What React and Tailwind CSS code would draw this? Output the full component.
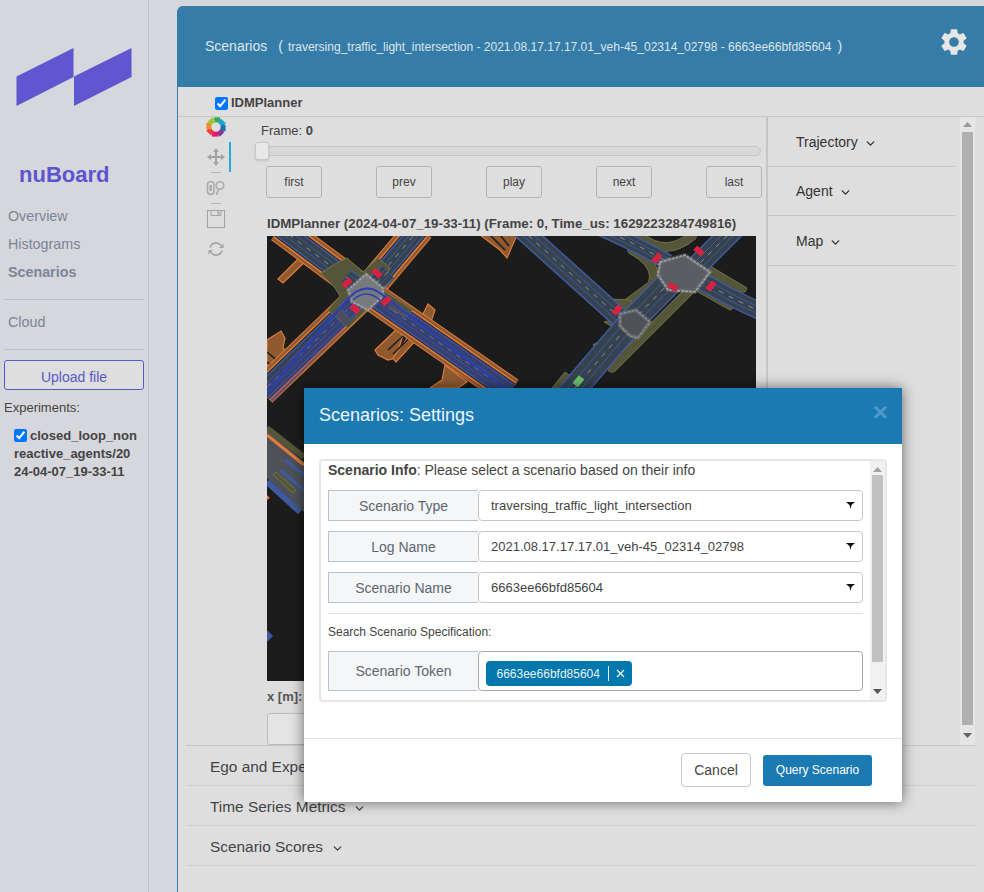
import React from 'react'
import { MdSettings } from 'react-icons/md'
import { FiChevronDown } from 'react-icons/fi'

const font = { fontFamily: '"Liberation Sans", Arial, sans-serif' }

// one road: kerb, tarmac, lane edges and dashes stacked as strokes
const Road = ({ d, w = 22, edge = '#3f5a9c', walk = false }) => (
    <g fill="none" strokeLinejoin="round">
        {walk && <path d={d} stroke="#e07b39" strokeWidth={w + 12} />}
        {walk && <path d={d} stroke="#8f5a30" strokeWidth={w + 10} />}
        {walk && <path d={d} stroke="#e07b39" strokeWidth={w + 5} />}
        {walk && <path d={d} stroke="#242424" strokeWidth={w + 2} />}
        <path d={d} stroke={edge} strokeWidth={w} />
        <path d={d} stroke="#36424e" strokeWidth={w - 3} />
        <path d={d} stroke="#3f5a9c" strokeWidth={w * 0.42} />
        <path d={d} stroke="#36424e" strokeWidth={w * 0.42 - 1.5} />
        <path d={d} stroke="#8b9096" strokeWidth="1" strokeDasharray="5 6" />
    </g>
)

const Kerb = ({ d, w = 8 }) => (
    <g fill="none" strokeLinejoin="round" strokeLinecap="round">
        <path d={d} stroke="#73734a" strokeWidth={w + 1.5} />
        <path d={d} stroke="#55553a" strokeWidth={w} />
    </g>
)

const Crossing = ({ points, fill = '#5a5e63', lines = '#b5b5b5' }) => (
    <g>
        <polygon points={points} fill={fill} stroke={lines} strokeWidth="1.5" strokeDasharray="3 1" />
        <polygon points={points} fill="none" stroke="#8a8a8a" strokeWidth="4" strokeOpacity="0.35" />
    </g>
)

const Light = ({ x, y, r = 45 }) => (
    <rect x={x - 5} y={y - 3} width="10" height="6" fill="#d6223f" transform={`rotate(${r} ${x} ${y})`} />
)

const MapPlot = () => (
    <svg viewBox="267 236 489 445" className="block w-[489px] h-[445px] bg-[#1c1c1c]">
        {/* orange parking areas */}
        <g fill="#8f5a30" stroke="#e07b39" strokeWidth="1.2">
            <polygon points="304,253 309,258 283,283 278,279" />
            <polygon points="267,340 281,331 285,338 283,348 293,358 267,378" />
            <polygon points="375,350 398,328 403,335 396,358 388,360 378,355" />
            <polygon points="420,320 428,304 435,310 430,325 396,362 393,358" />
            <polygon points="430,388 442,380 445,365 467,382 458,388" />
            <polygon points="480,235 517,235 507,258 500,250" />
        </g>
        <g fill="none" stroke="#1c1c1c" strokeWidth="1.5">
            <path d="M267,352 L286,368 M267,362 L282,374" />
            <path d="M388,350 L420,320 M393,354 L426,322" />
            <path d="M490,235 L505,250 M500,235 L509,246" />
        </g>
        {/* walkways first, the kerb shapes sit on top near the junction */}
        <Road d="M280,228 L366,292" w={18} walk />
        <Road d="M420,228 L366,292" w={18} walk />
        <Road d="M366,292 L262,392" w={18} walk />
        <Road d="M366,292 L510,392" w={18} walk />
        <polygon points="347,258 363,272 378,258 390,268 380,288 413,310 406,317 370,298 366,310 348,328 328,310 340,296 335,288 321,273 335,264" fill="#55553a" stroke="#73734a" strokeWidth="1" />
        <Road d="M346,277 L388,307" w={18} />
        <Road d="M388,272 L345,312" w={18} />
        <path d="M267,396 L366,292 L510,392" fill="none" stroke="#3a3fb0" strokeOpacity="0.35" strokeWidth="18" />
        <Crossing points="366,274 383,288 383,296 368,310 352,302 348,290" fill="#77797d" />
        <path d="M347,300 Q366,278 386,298" fill="none" stroke="#2b3fb0" strokeWidth="2" />
        <path d="M353,300 Q366,288 380,300" fill="none" stroke="#2b3fb0" strokeWidth="1.5" />
        <path d="M267,392 L347,300" fill="none" stroke="#2b3fb0" strokeWidth="2" />
        <path d="M386,298 L510,392" fill="none" stroke="#2b3fb0" strokeWidth="2" />
        <Light x={347} y={283} r={-40} />
        <Light x={377} y={273} r={40} />
        <Light x={355} y={309} r={40} />
        <Light x={386} y={301} r={-40} />

        {/* right side network */}
        <Kerb d="M632,250 Q660,265 652,285 L625,305" />
        <Kerb d="M640,236 Q665,258 692,236" />
        <Kerb d="M700,290 L730,307" w={5} />
        <Kerb d="M690,290 L655,325 L612,368" />
        <polygon points="705,263 747,288 745,292 712,290" fill="#55553a" stroke="#73734a" strokeWidth="1" />
        <polygon points="590,298 620,318 604,322 618,330 593,345 600,348 640,320 630,300" fill="#55553a" stroke="#73734a" strokeWidth="1" />
        <polygon points="552,388 565,372 572,377 560,388" fill="#55553a" stroke="#73734a" strokeWidth="1" />
        <Road d="M520,228 L620,318" w={20} />
        <Road d="M600,228 Q640,246 668,262" w={16} />
        <Road d="M735,228 L695,268" w={22} />
        <Road d="M700,280 Q730,298 762,312" w={18} />
        <Road d="M672,280 L633,320 L575,388 L565,400" w={26} />
        <Crossing points="620,314 636,310 650,322 638,338 630,336 620,326" fill="#4e5258" lines="#8a8a8a" />
        <Crossing points="660,262 685,255 710,272 695,292 668,290 658,275" />
        <rect x="575" y="376" width="7" height="10" rx="1" fill="#6fc36f" transform="rotate(40 578 381)" />
        <Light x={617} y={310} r={-50} />
        <Light x={657} y={258} r={-50} />
        <Light x={699} y={251} r={40} />
        <Light x={673} y={287} r={30} />
        <Light x={711} y={286} r={-50} />

        {/* strip left of the dialog */}
        <polygon points="267,430 304,462 304,512 267,478" fill="#4e5258" />
        <path d="M267,428 L304,457" fill="none" stroke="#55553a" strokeWidth="6" />
        <path d="M267,435 L304,465" fill="none" stroke="#e07b39" strokeWidth="3" />
        <path d="M267,482 L300,512" fill="none" stroke="#3f5a9c" strokeWidth="6" />
        <path d="M285,460 L304,475 M280,470 L304,490" fill="none" stroke="#3f5a9c" strokeWidth="3" />
        <polygon points="273,475 276,472 296,490 293,493" fill="#55553a" stroke="#73734a" strokeWidth="1" />
        <polygon points="267,495 270,498 267,500" fill="#e07b39" />
        <polygon points="267,630 273,636 267,642" fill="#3f5a9c" />
    </svg>
)

const ToolLogo = () => {
    const colors = ['#3aa655', '#1ca6c9', '#1f6fb5', '#7b3f98', '#e6147a', '#e9403a', '#f28c28', '#9fc43a']
    return (
        <svg width="20" height="20" viewBox="-10 -10 20 20">
            {colors.map((c, i) => (
                <rect key={c} x="-2.2" y="-9.6" width="6.4" height="5" fill={c} transform={`rotate(${i * 45})`} />
            ))}
        </svg>
    )
}

const MoveIcon = () => (
    <svg width="18" height="18" viewBox="0 0 18 18" fill="#a3a3a3">
        <path d="M9 0 L12 4 H10 V8 H14 V6 L18 9 L14 12 V10 H10 V14 H12 L9 18 L6 14 H8 V10 H4 V12 L0 9 L4 6 V8 H8 V4 H6 Z" />
    </svg>
)

const ZoomIcon = () => (
    <svg width="20" height="16" viewBox="0 0 20 16" fill="none" stroke="#aaa" strokeWidth="1.6">
        <rect x="1.5" y="1.5" width="6.5" height="13" rx="3.2" />
        <path d="M4.7 5 V11" strokeWidth="2.4" />
        <circle cx="14" cy="5.5" r="3.8" />
        <path d="M12.6 9.2 L10.5 15" />
    </svg>
)

const SaveIcon = () => (
    <svg width="18" height="18" viewBox="0 0 18 18" fill="none" stroke="#a3a3a3" strokeWidth="1">
        <rect x="0.5" y="0.5" width="17" height="17" />
        <path d="M4 0.5 V5.5 H14 V0.5" />
        <rect x="10.5" y="1.5" width="2" height="3" fill="#a3a3a3" stroke="none" />
    </svg>
)

const ResetIcon = () => (
    <svg width="16" height="16" viewBox="0 0 16 16" fill="none" stroke="#a3a3a3" strokeWidth="1.7">
        <path d="M2 6.5 A6.2 6.2 0 0 1 13 4.5" />
        <path d="M14 9.5 A6.2 6.2 0 0 1 3 11.5" />
        <path d="M15.5 2.5 L15.5 7 L11 7 Z" fill="#a3a3a3" stroke="none" />
        <path d="M0.5 13.5 L0.5 9 L5 9 Z" fill="#a3a3a3" stroke="none" />
    </svg>
)

const Sidebar = () => (
    <div className="w-[149px] shrink-0 border-r border-[#c3c4c8] h-full pl-1 pr-1">
        <svg width="116" height="60" viewBox="0 0 116 60" className="ml-3 mt-12 block" fill="#5f57cf">
            <polygon points="0.5,28.5 57.5,0 57.5,29 0.5,58" />
            <polygon points="58,28.5 115.5,0 115.5,29 58,58" />
        </svg>
        <div className="ml-[15px] mt-[53px] text-[22px] leading-[28px] font-bold text-[#5c55d0]">nuBoard</div>
        <div className="ml-1 mt-[13px] text-[14.3px] text-[#7b8597]">
            <div className="h-7 leading-7">Overview</div>
            <div className="h-7 leading-7">Histograms</div>
            <div className="h-7 leading-7 font-bold">Scenarios</div>
        </div>
        <div className="mt-[13px] w-[140px] border-t border-[#bfc0c4]"></div>
        <div className="ml-1 mt-[8px] h-7 leading-7 text-[14.3px] text-[#7b8597]">Cloud</div>
        <div className="mt-[13px] w-[140px] border-t border-[#bfc0c4]"></div>
        <div className="mt-[10px] w-[140px] h-[30px] leading-[32px] text-center border border-[#5a59c6] rounded-[3px] bg-[#dedede] text-[14px] text-[#5a59c6]">Upload file</div>
        <div className="mt-[10px] text-[13px] leading-4 text-[#444]">Experiments:</div>
        <div className="mt-[11px] ml-[10px] text-[13px] leading-[18px] font-bold text-[#444] whitespace-nowrap">
            <input type="checkbox" defaultChecked className="w-[13px] h-[13px] mr-[3px] align-[-2px]" />
            closed_loop_non<br />reactive_agents/20<br />24-04-07_19-33-11
        </div>
    </div>
)

const Toolbar = () => (
    <div className="w-[54px] shrink-0 relative flex flex-col items-center pl-[22px]">
        <div className="h-[20px] flex items-center"><ToolLogo /></div>
        <div className="absolute right-0 top-[25px] w-[2px] h-[30px] bg-[#26aae1] mr-[1px]"></div>
        <div className="h-[18px] mt-[11px]"><MoveIcon /></div>
        <div className="w-[10px] mt-[6px] border-t border-[#b9b9b9]"></div>
        <div className="h-[16px] mt-[7px]"><ZoomIcon /></div>
        <div className="w-[10px] mt-[7px] border-t border-[#b9b9b9]"></div>
        <div className="h-[18px] mt-[6px]"><SaveIcon /></div>
        <div className="h-[16px] mt-[13px]"><ResetIcon /></div>
    </div>
)

const PlayerButton = ({ children }) => (
    <div className="w-[56px] h-[32px] leading-[31px] text-center border border-[#b4b4b4] rounded-[3px] text-[12px] text-[#444]">{children}</div>
)

const Player = () => (
    <div className="w-[534px] shrink-0 pl-[24px]">
        <div className="ml-[5px] mt-[6px] text-[13px] leading-4 text-[#444]">Frame: <b>0</b></div>
        <div className="relative mt-[3px] h-[18px] w-[505px] flex items-center">
            <div className="w-full h-[10px] rounded-full border border-[#c4c4c4] bg-[#d8d8d8]"></div>
            <div className="absolute left-[-1px] top-0 w-[14px] h-[18px] rounded-[3px] border border-[#c8c8c8] bg-[#e8e8e8] shadow-sm"></div>
        </div>
        <div className="mt-[6px] ml-[10px] w-[496px] flex justify-between">
            <PlayerButton>first</PlayerButton>
            <PlayerButton>prev</PlayerButton>
            <PlayerButton>play</PlayerButton>
            <PlayerButton>next</PlayerButton>
            <PlayerButton>last</PlayerButton>
        </div>
        <div className="ml-[11px] mt-[18px] h-4 leading-4 whitespace-nowrap text-[13.3px] font-bold text-[#444]">IDMPlanner (2024-04-07_19-33-11) (Frame: 0, Time_us: 1629223284749816)</div>
        <div className="ml-[11px] mt-[4px]"><MapPlot /></div>
        <div className="ml-[11px] mt-[8px] text-[13px] leading-4 font-bold text-[#555]">x [m]:</div>
        <div className="ml-[11px] mt-[8px] w-[200px] h-[32px] border border-[#bcbcbc] rounded-[3px] bg-[#e4e4e4]"></div>
    </div>
)

const SideSection = ({ title }) => (
    <div className="h-[49.5px] pt-[2px] border-b border-[#c6c6c6] pl-[28px] flex items-center gap-[6px] text-[14px] text-[#333]">
        {title}
        <FiChevronDown size={13} strokeWidth={2.5} className="mt-[2px]" />
    </div>
)

const Accordion = ({ title }) => (
    <div className="h-[40px] pt-[3px] border-b border-[#cfcfcf] pl-[24px] flex items-center gap-[8px] text-[15.4px] text-[#444]">
        {title}
        <FiChevronDown size={13} strokeWidth={2.5} className="mt-[2px]" />
    </div>
)

const Arrow = ({ up, color = '#777' }) => (
    <svg width="9" height="5" viewBox="0 0 9 5" fill={color} className="block">
        <polygon points={up ? '4.5,0 9,5 0,5' : '0,0 9,0 4.5,5'} />
    </svg>
)

const Panel = () => (
    <div className="ml-[28px] flex-1 h-[886px] mt-[6px] rounded-tl-[6px] border-l border-[#367ca8] bg-[#dedede] flex flex-col">
        <div className="h-[81px] shrink-0 bg-[#367ca8] rounded-tl-[5px] flex items-center pl-[27px] pr-[16px] text-[#dce6ee]">
            <span className="text-[14px]">Scenarios</span>
            <span className="ml-[11px] text-[14px]">(</span>
            <span className="ml-[5px] text-[12px] whitespace-nowrap">traversing_traffic_light_intersection - 2021.08.17.17.17.01_veh-45_02314_02798 - 6663ee66bfd85604</span>
            <span className="ml-[6px] text-[14px]">)</span>
            <MdSettings size={32} className="ml-auto mb-[10px] mr-[-2px] text-[#e6e6e6]" />
        </div>
        <div className="h-[30px] shrink-0 pt-[3px] border-b border-[#c8c8c8] pl-[37px] flex items-center gap-[3px] text-[13px] font-bold text-[#444]">
            <input type="checkbox" defaultChecked className="w-[13px] h-[13px]" />
            IDMPlanner
        </div>
        <div className="h-[628px] shrink-0 flex overflow-hidden">
            <Toolbar />
            <Player />
            <div className="w-[189px] shrink-0 border-l-2 border-[#c6c6c6]">
                <SideSection title="Trajectory" />
                <SideSection title="Agent" />
                <SideSection title="Map" />
            </div>
            <div className="w-[15px] ml-[5px] shrink-0 bg-[#e6e6e6] flex flex-col items-center pt-[5px]">
                <Arrow up color="#999" />
                <div className="mt-[5px] w-[11px] h-[593px] bg-[#b0b0b0]"></div>
                <div className="mt-[8px]"><Arrow color="#666" /></div>
            </div>
        </div>
        <div className="mx-[8px] w-[789px] border-t border-[#c6c6c6]">
            <Accordion title="Ego and Expert Stats" />
            <Accordion title="Time Series Metrics" />
            <Accordion title="Scenario Scores" />
        </div>
    </div>
)

const FieldRow = ({ label, value }) => (
    <div className="flex h-[31px] mt-[10px]">
        <div className="w-[150px] text-center leading-[31px] text-[14px] text-[#5d6670] bg-[#f5f6f8] border border-r-0 border-[#b8c2cc]">{label}</div>
        <div className="w-[385px] h-[31px] pl-3 pr-[7px] flex items-center justify-between text-[13px] text-[#444] bg-white border border-[#c8c8c8] rounded-[4px]">
            {value}
            <svg width="9" height="7" viewBox="0 0 9 7" fill="#111"><polygon points="0,0 9,0 5.5,3 4.5,7 3.5,3" /></svg>
        </div>
    </div>
)

const SettingsModal = () => (
    <div className="absolute left-[304px] top-[388px] w-[598px] h-[414px] bg-white rounded-[2px] shadow-[0_0_14px_rgba(0,0,0,0.55)] flex flex-col">
        <div className="h-[56px] shrink-0 bg-[#1c7ab3] flex items-center justify-between pl-[15px] pr-[14px]">
            <span className="text-[18px] text-[#eef5fa] mt-[-2px]">Scenarios: Settings</span>
            <span className="text-[26px] font-bold text-[#4f9acb] mt-[-8px]">×</span>
        </div>
        <div className="h-[294px] shrink-0 pt-[16px] pl-[15px]">
            <div className="w-[568px] h-[243px] border-2 border-[#e6e6e6] rounded-[4px] flex overflow-hidden -mt-px">
                <div className="flex-1 pl-[7px] pt-px">
                    <div className="h-[18px] leading-[16px] text-[14px] text-[#444]"><b>Scenario Info</b>: Please select a scenario based on their info</div>
                    <FieldRow label="Scenario Type" value="traversing_traffic_light_intersection" />
                    <FieldRow label="Log Name" value="2021.08.17.17.17.01_veh-45_02314_02798" />
                    <FieldRow label="Scenario Name" value="6663ee66bfd85604" />
                    <div className="mt-[10px] w-[535px] border-t border-[#e2e2e2]"></div>
                    <div className="mt-[10px] h-4 leading-4 text-[12px] text-[#444]">Search Scenario Specification:</div>
                    <div className="flex h-[40px] mt-[11px]">
                        <div className="w-[150px] text-center leading-[38px] text-[14px] text-[#5d6670] bg-[#f5f6f8] border border-r-0 border-[#b8c2cc]">Scenario Token</div>
                        <div className="w-[385px] h-[40px] bg-white border border-[#a8a8a8] rounded-[4px] pl-[7px] pt-[9px]">
                            <div className="w-[146px] h-[25px] bg-[#0077ad] rounded-[4px] flex items-center pl-[10.5px] text-[12px] text-[#e8f3f8]">
                                6663ee66bfd85604
                                <span className="ml-[8px] h-[15px] border-l border-[#e8f3f8]"></span>
                                <svg width="9" height="9" viewBox="0 0 9 9" stroke="#e8f3f8" strokeWidth="1.4" className="ml-[7px]">
                                    <path d="M1 1 L8 8 M8 1 L1 8" />
                                </svg>
                            </div>
                        </div>
                    </div>
                </div>
                <div className="w-[15px] shrink-0 bg-[#f1f1f1] flex flex-col items-center pt-[6px]">
                    <Arrow up color="#a3a3a3" />
                    <div className="mt-[3px] w-[11px] h-[187px] bg-[#c1c1c1]"></div>
                    <div className="mt-[27px]"><Arrow color="#555" /></div>
                </div>
            </div>
        </div>
        <div className="flex-1 border-t border-[#e2e2e2] flex items-start justify-end gap-[12px] pt-[14px] pr-[30px]">
            <div className="w-[70px] h-[34px] leading-[33px] text-center text-[14px] text-[#444] bg-white border border-[#c8c8c8] rounded-[4px]">Cancel</div>
            <div className="w-[109px] h-[31px] mt-[2px] leading-[30px] text-center text-[12px] text-white bg-[#1c7ab3] rounded-[3px]">Query Scenario</div>
        </div>
    </div>
)

const App = () => (
    <div className="relative w-[984px] h-[892px] overflow-hidden bg-[#d6d7dc] flex" style={font}>
        <Sidebar />
        <Panel />
        <SettingsModal />
    </div>
)

export default App
